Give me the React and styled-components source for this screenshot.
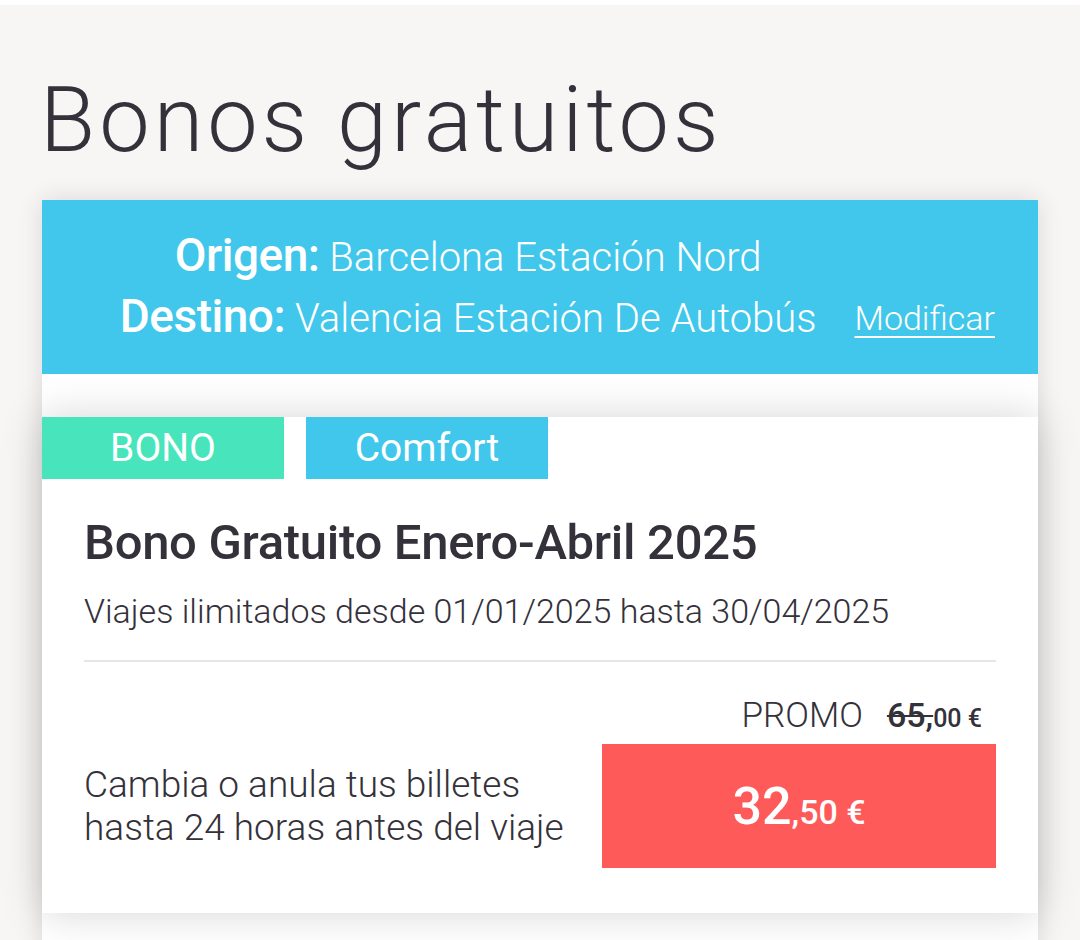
import React from 'react';
import styled, { createGlobalStyle } from 'styled-components';

const GlobalStyle = createGlobalStyle`
    body {
        margin: 0;
        background-color: #f7f6f5;
        font-family: Roboto, "Liberation Sans", sans-serif;
        color: #34313a;
    }
`;

const Page = styled.div`
    border-top: 5px solid #ffffff;
    padding: 0 42px;
    height: 935px;
    overflow: hidden;
`;

const Title = styled.h1`
    margin: 71px 0 34px -2px;
    font-size: 90px;
    line-height: 90px;
    font-weight: 300;
    letter-spacing: 4px;
`;

const Wrapper = styled.div`
    background-color: #ffffff;
    box-shadow: 0 0 24px rgba(0, 0, 0, .12);
`;

const Banner = styled.div`
    height: 174px;
    box-sizing: border-box;
    padding: 27px 43px 25px;
    background-color: #41c7eb;
    color: #ffffff;
    display: flex;
    justify-content: flex-end;
    align-items: flex-end;
    gap: 38px;
`;

const Route = styled.div`
    text-align: center;
`;

const RouteLine = styled.div`
    font-size: 40px;
    line-height: 61px;
    white-space: nowrap;
`;

const RouteLabel = styled.span`
    font-size: 46px;
    line-height: 1;
    font-weight: 500;
    letter-spacing: -0.5px;
`;

const RouteValue = styled.span`
    font-size: 40px;
    line-height: 1;
    font-weight: 300;
`;

const Modify = styled.a`
    font-size: 34px;
    font-weight: 300;
    line-height: 61px;
    color: #ffffff;
    text-decoration: underline;
    text-decoration-thickness: 2px;
    text-underline-offset: 6px;
    cursor: pointer;
`;

const List = styled.div`
    padding: 43px 0 40px;
`;

const Card = styled.div`
    height: 496px;
    background-color: #ffffff;
    box-shadow: 0 0 40px rgba(0, 0, 0, .17);
`;

const Tags = styled.div`
    display: flex;
    gap: 22px;
`;

const Tag = styled.div`
    width: 242px;
    height: 62px;
    display: flex;
    justify-content: center;
    align-items: center;
    background-color: ${({ color }) => color};
    color: #ffffff;
    font-size: 39px;
    font-weight: 400;
`;

const Body = styled.div`
    padding: 0 42px;
`;

const Heading = styled.h2`
    margin: 36px 0 0;
    font-size: 49px;
    line-height: 55px;
    font-weight: 500;
    letter-spacing: -0.3px;
`;

const Subtitle = styled.p`
    margin: 21px 0 0;
    font-size: 34px;
    line-height: 40px;
    font-weight: 300;
`;

const Divider = styled.hr`
    margin: 29px 0 0;
    border: none;
    height: 2px;
    background-color: #e7e6e4;
`;

const PriceGrid = styled.div`
    display: grid;
    grid-template-columns: 1fr 394px;
    align-items: center;
    row-gap: 5px;
    margin-top: 33px;
`;

const Promo = styled.div`
    grid-column: 2;
    text-align: right;
    padding-right: 14px;
    font-size: 35px;
    line-height: 40px;
    font-weight: 300;
    white-space: nowrap;
`;

const OldPrice = styled.span`
    margin-left: 24px;
    font-weight: 500;
`;

const Struck = styled.span`
    font-size: 34px;
    text-decoration: line-through;
    text-decoration-thickness: 2px;
`;

const Small = styled.span`
    font-size: ${({ size }) => size}px;
`;

const Conditions = styled.p`
    margin: 0;
    font-size: 37px;
    line-height: 43px;
    font-weight: 300;
`;

const BuyButton = styled.button`
    height: 124px;
    border: none;
    background-color: #ff5a5a;
    color: #ffffff;
    font-family: inherit;
    font-size: 52px;
    font-weight: 500;
    cursor: pointer;
`;

export default function App() {
    return (
        <>
            <GlobalStyle />
            <Page>
                <Title>Bonos gratuitos</Title>
                <Wrapper>
                    <Banner>
                        <Route>
                            <RouteLine>
                                <RouteLabel>Origen:</RouteLabel> <RouteValue>Barcelona Estación Nord</RouteValue>
                            </RouteLine>
                            <RouteLine>
                                <RouteLabel>Destino:</RouteLabel> <RouteValue>Valencia Estación De Autobús</RouteValue>
                            </RouteLine>
                        </Route>
                        <Modify>Modificar</Modify>
                    </Banner>
                    <List>
                        <Card>
                            <Tags>
                                <Tag color='#48e5bd'>BONO</Tag>
                                <Tag color='#41c7eb'>Comfort</Tag>
                            </Tags>
                            <Body>
                                <Heading>Bono Gratuito Enero-Abril 2025</Heading>
                                <Subtitle>Viajes ilimitados desde 01/01/2025 hasta 30/04/2025</Subtitle>
                                <Divider />
                                <PriceGrid>
                                    <Promo>
                                        PROMO
                                        <OldPrice><Struck>65,</Struck><Small size={25}>00 €</Small></OldPrice>
                                    </Promo>
                                    <Conditions>
                                        Cambia o anula tus billetes<br />
                                        hasta 24 horas antes del viaje
                                    </Conditions>
                                    <BuyButton>32<Small size={34}>,50 €</Small></BuyButton>
                                </PriceGrid>
                            </Body>
                        </Card>
                    </List>
                </Wrapper>
            </Page>
        </>
    );
}
